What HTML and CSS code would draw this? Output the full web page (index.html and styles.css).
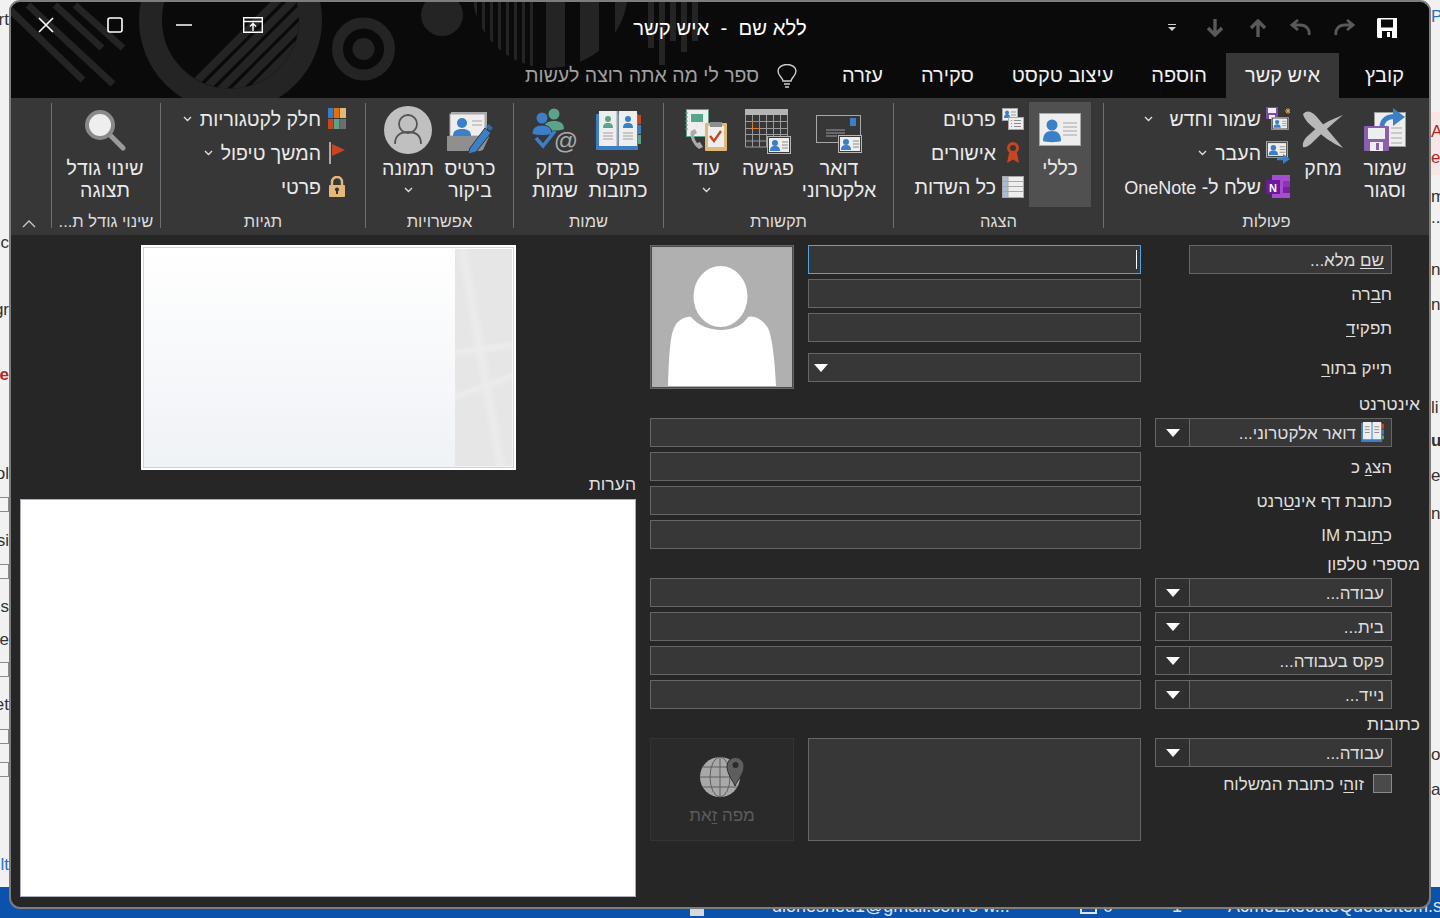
FILE: index.html
```html
<!DOCTYPE html>
<html lang="he">
<head>
<meta charset="utf-8">
<title>ללא שם - איש קשר</title>
<link rel="stylesheet" href="styles.css">
</head>
<body>
<svg class="defs" width="0" height="0" aria-hidden="true">
  <symbol id="card" viewBox="0 0 24 18">
    <rect x=".5" y=".5" width="23" height="17" fill="#3a3a3a" stroke="#b5b5b5"/>
    <rect x="2" y="2" width="20" height="14" fill="#eeeeee"/>
    <circle cx="8" cy="7" r="3" fill="#3a7fc8"/>
    <path d="M3 15c0-4 2-5 5-5s5 1 5 5z" fill="#3a7fc8"/>
    <path d="M15 6h6M15 9h6M15 12h6" stroke="#8c8c8c"/>
  </symbol>
  <symbol id="minibook" viewBox="0 0 24 22">
    <rect x="0" y="1" width="22" height="20" fill="#3a7fc8"/>
    <path d="M2 0h9v18H2zM12 0h9v18h-9z" fill="#eeeeee"/>
    <path d="M4 5h5M4 8h5M4 11h5M14 5h5M14 8h5M14 11h5" stroke="#8c8c8c"/>
    <rect x="22" y="2" width="2" height="5" fill="#c8451f"/>
    <rect x="22" y="8" width="2" height="5" fill="#3a7fc8"/>
    <rect x="22" y="14" width="2" height="4" fill="#5aa58a"/>
  </symbol>
  <symbol id="chev" viewBox="0 0 9 6">
    <path d="M1 1l3.500 3.500L8 1" fill="none" stroke="#dddddd" stroke-width="1.400"/>
  </symbol>
  <symbol id="tri" viewBox="0 0 14 8">
    <path d="M0 0h14L7 8z" fill="#ffffff"/>
  </symbol>
</svg>

<div class="desktop" aria-hidden="true">
  <span class="frag fl" style="top:10px">rt</span>
  <span class="frag fl" style="top:233px">ic</span>
  <span class="frag fl" style="top:300px">gr</span>
  <span class="frag fl red bold" style="top:365px">se</span>
  <span class="frag fl" style="top:464px">ol</span>
  <span class="frag fl" style="top:531px">si</span>
  <span class="frag fl" style="top:597px">es</span>
  <span class="frag fl" style="top:630px">re</span>
  <span class="frag fl" style="top:695px">et</span>
  <span class="frag fl blue" style="top:855px">lt</span>
  <span class="tick" style="top:497px"></span>
  <span class="tick" style="top:564px"></span>
  <span class="tick" style="top:662px"></span>
  <span class="tick" style="top:729px"></span>
  <span class="tick" style="top:762px"></span>
  <span class="pink"></span>
  <span class="frag fr blue" style="top:7px">P</span>
  <span class="frag fr red" style="top:122px">A</span>
  <span class="frag fr red" style="top:148px">e</span>
  <span class="frag fr" style="top:187px">m</span>
  <span class="frag fr" style="top:208px">..</span>
  <span class="frag fr" style="top:260px">n</span>
  <span class="frag fr" style="top:295px">ne</span>
  <span class="frag fr" style="top:398px">li</span>
  <span class="frag fr bold" style="top:431px">u</span>
  <span class="frag fr" style="top:466px">er</span>
  <span class="frag fr" style="top:504px">n</span>
  <span class="frag fr" style="top:745px">o</span>
  <span class="frag fr" style="top:780px">a</span>
  <div class="taskbar">
    <span class="tskbox" style="left:690px"></span>
    <span class="task" style="left:772px">dionesned1@gmail.com's w...</span>
    <span class="tskout" style="left:1080px"></span>
    <span class="task" style="left:1103px">0</span>
    <span class="task" style="left:1172px">1</span>
    <span class="task" style="left:1228px">AcmeExecuteQueueItem.s</span>
  </div>
</div>

<main class="window" dir="rtl">
  <header class="titlebar">
    <svg class="decor" width="1418" height="96" viewBox="11 2 1418 96" aria-hidden="true">
      <defs>
        <clipPath id="ringIn"><path d="M162 20a68.500 68.500 0 1 0 137 0V2H162z"/></clipPath>
        <clipPath id="bigC"><circle cx="550" cy="-10" r="78"/></clipPath>
      </defs>
      <g stroke="#242424" stroke-width="7" fill="none">
        <path d="M8 8l75 72M28 5l85 79M55 5l47 43M75 5l48 43"/>
      </g>
      <circle cx="230.500" cy="20" r="80" fill="none" stroke="#242424" stroke-width="23"/>
      <g clip-path="url(#ringIn)" stroke="#242424" stroke-width="8" fill="none">
        <path d="M278 0L178 100M294 0L194 100M310 0L210 100M326 0L226 100M342 0L242 100M358 0L258 100"/>
      </g>
      <circle cx="363.500" cy="49" r="26" fill="none" stroke="#242424" stroke-width="11"/>
      <circle cx="363.500" cy="49" r="11" fill="#242424"/>
      <circle cx="442" cy="15" r="21" fill="#242424"/>
      <g clip-path="url(#bigC)" fill="#242424">
        <rect x="474" width="3" height="96"/><rect x="482" width="3" height="96"/>
        <rect x="490" width="3" height="96"/><rect x="498" width="3" height="96"/>
        <rect x="506" width="3" height="96"/><rect x="514" width="3" height="96"/>
        <rect x="522" width="3" height="96"/><rect x="530" width="3" height="96"/>
        <rect x="546" width="19" height="96"/><rect x="580" width="19" height="96"/>
        <rect x="615" width="19" height="96"/>
      </g>
      <g fill="#242424">
        <rect x="648" width="6" height="48"/><rect x="659" width="6" height="65"/>
        <rect x="670" width="6" height="41"/><rect x="681" width="6" height="52"/>
        <rect x="692" width="6" height="41"/>
      </g>
    </svg>
    <div class="titlerow">
      <div class="qat">
        <span class="qbtn" title="שמור"><svg width="20" height="20" viewBox="0 0 20 20"><path d="M1 0h19v20H1L0 19V1z" fill="#fff"/><path d="M4 1.500h12v8H4z" fill="#0a0a0a"/><path d="M5 13h10v7H5z" fill="#0a0a0a"/><path d="M10 14h3v5h-3z" fill="#fff"/></svg></span>
        <span class="qbtn"><svg width="22" height="18" viewBox="0 0 22 18"><path d="M3 16c-1-6 3-10 9-10h7M14 1l6 5-6 5" fill="none" stroke="#595959" stroke-width="2.800"/></svg></span>
        <span class="qbtn"><svg width="22" height="18" viewBox="0 0 22 18"><path d="M19 16c1-6-3-10-9-10H3M8 1L2 6l6 5" fill="none" stroke="#595959" stroke-width="2.800"/></svg></span>
        <span class="qbtn"><svg width="16" height="18" viewBox="0 0 16 18"><path d="M8 18V3M1 9l7-7 7 7" fill="none" stroke="#595959" stroke-width="3.400"/></svg></span>
        <span class="qbtn"><svg width="16" height="18" viewBox="0 0 16 18"><path d="M8 0v15M1 9l7 7 7-7" fill="none" stroke="#595959" stroke-width="3.400"/></svg></span>
        <span class="qbtn qmore"><svg width="8" height="7" viewBox="0 0 8 7"><path d="M0 0h8v1H0zM0 3h8L4 7z" fill="#cfcfcf"/></svg></span>
      </div>
      <div class="wintitle">ללא שם&nbsp; - &nbsp;איש קשר</div>
      <div class="wincontrols">
        <span class="wbtn"><svg width="20" height="16" viewBox="0 0 20 16"><path d="M.7.7h18.600v14.600H.7zM1 4.500h18M10 14V7M7 9.500l3-3 3 3" fill="none" stroke="#fff" stroke-width="1.400"/></svg></span>
        <span class="wbtn"><svg width="16" height="2" viewBox="0 0 16 2"><path d="M0 1h16" stroke="#fff" stroke-width="1.400"/></svg></span>
        <span class="wbtn"><svg width="16" height="16" viewBox="0 0 16 16"><rect x="1" y="1" width="14" height="14" rx="2" fill="none" stroke="#fff" stroke-width="1.600"/></svg></span>
        <span class="wbtn"><svg width="16" height="16" viewBox="0 0 16 16"><path d="M1 1l14 14M15 1L1 15" stroke="#fff" stroke-width="1.600"/></svg></span>
      </div>
    </div>
    <nav class="tabs">
      <span class="tab">קובץ</span>
      <span class="tab active">איש קשר</span>
      <span class="tab">הוספה</span>
      <span class="tab">עיצוב טקסט</span>
      <span class="tab">סקירה</span>
      <span class="tab">עזרה</span>
      <span class="tell">
        <svg width="20" height="24" viewBox="0 0 20 24"><path d="M6 17c0-3-5-5-5-10a9 6.500 0 0 1 18 0c0 5-5 7-5 10zM7 20h6M8 23h4" fill="none" stroke="#d0d0d0" stroke-width="1.400"/></svg>
        <span>ספר לי מה אתה רוצה לעשות</span>
      </span>
    </nav>
  </header>

  <section class="ribbon">
    <div class="group g1">
      <div class="gbody">
        <div class="big w60">
          <span class="bigicon"><svg width="44" height="44" viewBox="0 0 44 44">
            <rect x="11.500" y="4.500" width="31" height="34" fill="#eeeeee" stroke="#9b9b9b"/>
            <path d="M28 20h11M28 25h11M28 30h11M28 35h11" stroke="#a5a5a5"/>
            <path d="M19 19C19 12 24 8.500 32 8.500" fill="none" stroke="#3a7fc8" stroke-width="5"/>
            <path d="M30 0l12 9-12 9z" fill="#3a7fc8"/>
            <rect x="1" y="18" width="25" height="25" rx="1" fill="#8a5fb0"/>
            <rect x="5" y="20" width="17" height="11" fill="#eeeeee"/>
            <rect x="7" y="34" width="13" height="9" fill="#eeeeee"/>
            <rect x="13" y="35" width="3" height="7" fill="#8a5fb0"/>
          </svg></span>
          <span class="lbl">שמור<br>וסגור</span>
        </div>
        <div class="big w60">
          <span class="bigicon"><svg width="42" height="38" viewBox="0 0 42 38">
            <path d="M1 3C5-1 9 0 14 5L41 37C30 32 20 25 12 17 7 13 2 8 1 3z" fill="#b8b8b8"/>
            <path d="M1 36C0 31 3 27 8 23 16 15 28 9 41 4 30 13 20 22 12 30 8 34 4 37 1 36z" fill="#b8b8b8"/>
          </svg></span>
          <span class="lbl">מחק</span>
        </div>
        <div class="smalls">
          <div class="small">
            <span class="sicon"><svg width="24" height="24" viewBox="0 0 24 24">
              <rect x="0" y="0" width="12" height="12" fill="#7a4ea8"/><rect x="2" y="1" width="8" height="5" fill="#eee"/><rect x="3" y="8" width="6" height="4" fill="#eee"/>
              <use href="#card" x="5" y="10" width="18" height="13"/>
              <path d="M22 7V1M19 4h6M20 2l4 4M24 2l-4 4" stroke="#e3a45a"/>
            </svg></span><span>שמור וחדש</span><svg class="chev far"><use href="#chev"/></svg>
          </div>
          <div class="small">
            <span class="sicon"><svg width="24" height="24" viewBox="0 0 24 24">
              <use href="#card" x="0" y="0" width="22" height="17"/>
              <path d="M11 18h9" stroke="#3a7fc8" stroke-width="2.400"/><path d="M17 13l7 5-7 5z" fill="#3a7fc8"/>
            </svg></span><span>העבר</span><svg class="chev"><use href="#chev"/></svg>
          </div>
          <div class="small">
            <span class="sicon"><svg width="24" height="24" viewBox="0 0 24 24">
              <rect x="6" y="0" width="18" height="23" fill="#a64dcf"/>
              <rect x="17" y="6" width="7" height="6" fill="#8f33b5"/><rect x="17" y="12" width="7" height="6" fill="#7a1fa0"/>
              <rect x="0" y="5" width="14" height="14" fill="#6a1a9a"/>
              <text x="7" y="16.500" class="n">N</text>
            </svg></span><span>שלח ל- <span class="latin">OneNote</span></span>
          </div>
        </div>
      </div>
      <div class="gname">פעולות</div>
    </div>

    <div class="group g2">
      <div class="gbody">
        <div class="big w62 on">
          <span class="bigicon"><svg width="42" height="33" viewBox="0 0 42 33">
            <rect x=".5" y=".5" width="41" height="32" fill="#eeeeee" stroke="#a8a8a8"/>
            <circle cx="13" cy="12" r="5.500" fill="#3a7fc8"/>
            <path d="M4 28c0-7 3-10 9-10s9 3 9 10c-3 1.500-15 1.500-18 0z" fill="#3a7fc8"/>
            <path d="M24 10h14M24 14h14M24 18h14M24 22h14" stroke="#a5a5a5"/>
          </svg></span>
          <span class="lbl">כללי</span>
        </div>
        <div class="smalls">
          <div class="small">
            <span class="sicon"><svg width="22" height="22" viewBox="0 0 22 22">
              <rect x=".5" y=".5" width="15" height="12" fill="#eee" stroke="#a8a8a8"/>
              <circle cx="5" cy="4.500" r="2" fill="#3a7fc8"/><path d="M2 10c0-3 1-4 3-4s3 1 3 4z" fill="#3a7fc8"/><path d="M9 4h5M9 7h5" stroke="#999"/>
              <rect x="6.500" y="9.500" width="15" height="12" fill="#eee" stroke="#a8a8a8"/>
              <path d="M9 12.500h1M12 12.500h7M9 15.500h1M12 15.500h7M9 18.500h1M12 18.500h7" stroke="#8c8c8c"/>
            </svg></span><span>פרטים</span>
          </div>
          <div class="small">
            <span class="sicon"><svg width="22" height="22" viewBox="0 0 22 22">
              <circle cx="11" cy="6" r="4.500" fill="none" stroke="#c8451f" stroke-width="3"/>
              <path d="M7 11h8l2 10-6-3.500L5 21z" fill="#c8451f"/>
            </svg></span><span>אישורים</span>
          </div>
          <div class="small">
            <span class="sicon"><svg width="22" height="22" viewBox="0 0 22 22">
              <rect x=".5" y=".5" width="21" height="21" fill="#eee" stroke="#a8a8a8"/>
              <rect x="1" y="1" width="5" height="20" fill="#a8bdd4"/>
              <path d="M1 5.500h20M1 10.500h20M1 15.500h20M6 1v20" stroke="#a8a8a8"/>
            </svg></span><span>כל השדות</span>
          </div>
        </div>
      </div>
      <div class="gname">הצגה</div>
    </div>

    <div class="group g3">
      <div class="gbody">
        <div class="big w80">
          <span class="bigicon nudge8"><svg width="46" height="38" viewBox="0 0 46 38">
            <rect x=".5" y=".5" width="44" height="27" fill="none" stroke="#a8a8a8"/>
            <rect x="34" y="3" width="6" height="8" fill="#3a7fc8"/>
            <path d="M10 15h19M10 18h19M10 21h11" stroke="#9c9c9c"/>
            <use href="#card" x="22" y="20" width="24" height="18"/>
          </svg></span>
          <span class="lbl">דואר<br>אלקטרוני</span>
        </div>
        <div class="big w62">
          <span class="bigicon nudge3"><svg width="47" height="45" viewBox="0 0 47 45">
            <rect x="0" y="0" width="43" height="6" fill="#b5b5b5"/>
            <path d="M.5 6v32h42V6M7.500 6v32M14.500 6v32M21.500 6v32M28.500 6v32M35.500 6v32M.5 12.500h42M.5 19.500h42M.5 25.500h42M.5 32h42" fill="none" stroke="#9a9a9a"/>
            <rect x="7.500" y="12.500" width="7" height="7" fill="#373737" stroke="#e0781f"/>
            <use href="#card" x="22" y="27" width="24" height="18"/>
          </svg></span>
          <span class="lbl">פגישה</span>
        </div>
        <div class="big w62">
          <span class="bigicon"><svg width="42" height="42" viewBox="0 0 42 42">
            <rect x="1.500" y=".5" width="22" height="27" fill="#eeeeee" stroke="#5aa58a"/>
            <rect x="6" y="5" width="12" height="8" fill="#5aa58a"/>
            <path d="M0 4h3M0 8h3M0 12h3M0 16h3M0 20h3" stroke="#888"/>
            <path d="M6 22c-2 5 2 14 8 18l4-2-3-5-3 1c-2-3-3-5-3-8l3-2-2-4z" fill="#aaaaaa"/>
            <rect x="20" y="14" width="22" height="28" rx="1" fill="#e0b878"/>
            <rect x="23" y="17" width="16" height="21" fill="#eeeeee"/>
            <rect x="25" y="13" width="12" height="5" fill="#8d8d8d"/>
            <path d="M25 27l4 5 7-10" fill="none" stroke="#c8451f" stroke-width="2.400"/>
          </svg></span>
          <span class="lbl">עוד</span>
          <svg class="chev under"><use href="#chev"/></svg>
        </div>
      </div>
      <div class="gname">תקשורת</div>
    </div>

    <div class="group g4">
      <div class="gbody">
        <div class="big w62">
          <span class="bigicon"><svg width="45" height="40" viewBox="0 0 45 40">
            <rect x="0" y="4" width="42" height="36" fill="#3a7fc8"/>
            <rect x="42" y="5" width="3" height="9" fill="#c8451f"/><rect x="42" y="15" width="3" height="9" fill="#3a7fc8"/><rect x="42" y="25" width="3" height="9" fill="#5aa58a"/>
            <path d="M3 1h18v35H3zM23 1h18v35H23z" fill="#eeeeee"/>
            <path d="M21.500 1v35" stroke="#a0a0a0" stroke-width="2"/>
            <circle cx="12" cy="9" r="3" fill="#5aa58a"/><path d="M7 18c0-4 2-5 5-5s5 1 5 5z" fill="#5aa58a"/>
            <circle cx="32" cy="9" r="3" fill="#3a7fc8"/><path d="M27 18c0-4 2-5 5-5s5 1 5 5z" fill="#3a7fc8"/>
            <path d="M7 23h10M7 26h10M7 29h10M27 23h10M27 26h10M27 29h10" stroke="#a0a0a0"/>
          </svg></span>
          <span class="lbl">פנקס<br>כתובות</span>
        </div>
        <div class="big w64">
          <span class="bigicon"><svg width="46" height="46" viewBox="0 0 46 46">
            <circle cx="22" cy="7" r="5.500" fill="#5aa58a"/><path d="M12 22c0-6 4-8 10-8s10 2 10 8c-4 2-16 2-20 0z" fill="#5aa58a"/>
            <circle cx="10" cy="11" r="5.500" fill="#3a7fc8"/><path d="M0 27c0-6 4-9 10-9s10 3 10 9c-4 2-16 2-20 0z" fill="#3a7fc8" stroke="#373737"/>
            <path d="M4 31l7 8 12-15" fill="none" stroke="#3a7fc8" stroke-width="3.600"/>
            <text x="34" y="42" class="at">@</text>
          </svg></span>
          <span class="lbl">בדוק<br>שמות</span>
        </div>
      </div>
      <div class="gname">שמות</div>
    </div>

    <div class="group g5">
      <div class="gbody">
        <div class="big w62">
          <span class="bigicon nudge6"><svg width="46" height="42" viewBox="0 0 46 42">
            <rect x="4" y="0" width="36" height="24" fill="#aaaaaa"/>
            <rect x="3" y="2" width="35" height="22" fill="#eeeeee" stroke="#a8a8a8"/>
            <circle cx="15" cy="11" r="5" fill="#3a7fc8"/>
            <path d="M6 24c0-5 3-7 9-7s9 2 9 7z" fill="#3a7fc8"/>
            <path d="M25 9h10M25 13h10" stroke="#a5a5a5"/>
            <path d="M0 24h38l4-3v4l-6 13-3 1H0z" fill="#8f8f8f"/>
            <path d="M23 36L38 16l6 5-15 19-8 2z" fill="#3a7fc8" stroke="#373737"/>
            <path d="M39 15l3-3 4 4-3 3z" fill="#2f69a8"/>
          </svg></span>
          <span class="lbl">כרטיס<br>ביקור</span>
        </div>
        <div class="big w62">
          <span class="bigicon"><svg width="48" height="48" viewBox="0 0 48 48">
            <circle cx="24" cy="24" r="24" fill="#c0c0c0"/>
            <circle cx="24" cy="18" r="9" fill="none" stroke="#555" stroke-width="1.800"/>
            <path d="M11 38c0-8 5-12 13-12s13 4 13 12" fill="none" stroke="#555" stroke-width="1.800"/>
          </svg></span>
          <span class="lbl">תמונה</span>
          <svg class="chev under"><use href="#chev"/></svg>
        </div>
      </div>
      <div class="gname">אפשרויות</div>
    </div>

    <div class="group g6">
      <div class="gbody">
        <div class="smalls">
          <div class="small tag">
            <span class="sicon t18"><svg width="18" height="22" viewBox="0 0 18 22">
              <rect width="5.500" height="10" fill="#3a7cc4"/><rect x="6" width="5.500" height="10" fill="#e07010"/><rect x="12" width="6" height="10" fill="#e0b878"/>
              <rect y="11" width="5.500" height="10" fill="#c8451f"/><rect x="6" y="11" width="5.500" height="10" fill="#5aa58a"/><rect x="12" y="11" width="6" height="10" fill="#6e6e6e"/>
            </svg></span><span>חלק לקטגוריות</span><svg class="chev"><use href="#chev"/></svg>
          </div>
          <div class="small tag">
            <span class="sicon t18"><svg width="18" height="22" viewBox="0 0 18 22">
              <rect x="1" y="0" width="2" height="22" fill="#aaaaaa"/>
              <path d="M4 2l13 6L4 14z" fill="#c8451f"/>
            </svg></span><span>המשך טיפול</span><svg class="chev"><use href="#chev"/></svg>
          </div>
          <div class="small tag">
            <span class="sicon t18"><svg width="18" height="22" viewBox="0 0 18 22">
              <path d="M4 9V6a5 5 0 0 1 10 0v3" fill="none" stroke="#e3b87a" stroke-width="2.400"/>
              <rect x="1" y="9" width="16" height="12" rx="1" fill="#e3b87a"/>
              <circle cx="9" cy="13.500" r="2" fill="#333"/><rect x="8" y="14" width="2" height="4" fill="#333"/>
            </svg></span><span>פרטי</span>
          </div>
        </div>
      </div>
      <div class="gname">תגיות</div>
    </div>

    <div class="group g7">
      <div class="gbody">
        <div class="big w90">
          <span class="bigicon"><svg width="42" height="42" viewBox="0 0 42 42">
            <path d="M26 26l13 13" stroke="#9a9a9a" stroke-width="5" stroke-linecap="round"/>
            <circle cx="16" cy="16" r="13" fill="#eeeeee" stroke="#8a8a8a" stroke-width="4"/>
          </svg></span>
          <span class="lbl">שינוי גודל<br>תצוגה</span>
        </div>
      </div>
      <div class="gname">שינוי גודל ת...</div>
    </div>

    <div class="collapse"><svg width="14" height="8" viewBox="0 0 14 8"><path d="M1 7l6-6 6 6" fill="none" stroke="#c8c8c8" stroke-width="1.400"/></svg></div>
  </section>

  <section class="form">
    <div class="fields">
      <div class="topblock">
        <div class="topcol">
          <div class="row"><div class="lead"><span class="fbtn w203"><span><u>שם</u> מלא...</span></span></div><div class="input focus"><span class="caret"></span></div></div>
          <div class="row"><div class="lead"><span class="flabel">ח<u>ב</u>רה</span></div><div class="input"></div></div>
          <div class="row"><div class="lead"><span class="flabel">תפקי<u>ד</u></span></div><div class="input"></div></div>
          <div class="row spaced"><div class="lead"><span class="flabel">תייק בתו<u>ר</u></span></div><div class="input dd"><svg class="tri"><use href="#tri"/></svg></div></div>
        </div>
        <div class="photo">
          <svg width="142" height="142" viewBox="0 0 142 142">
            <rect width="142" height="142" fill="#b0b0b0"/>
            <ellipse cx="69.500" cy="50.500" rx="27" ry="30.500" fill="#ffffff"/>
            <path d="M17 140C18 110 19 88 24 80 27 74 35 70 40 71 47 79 58 84 70 84 82 84 92 79 97 71 104 69 112 74 117 82 121 90 124 115 125 140z" fill="#ffffff"/>
            <rect x=".5" y=".5" width="141" height="141" fill="none" stroke="#4a4a4a"/>
          </svg>
        </div>
      </div>

      <div class="section">אינטרנט</div>
      <div class="row"><div class="lead"><span class="fbtn w203 withicon"><svg class="mbook"><use href="#minibook"/></svg><span>דואר אלקטרוני...</span></span><span class="ddbtn"><svg class="tri"><use href="#tri"/></svg></span></div><div class="input"></div></div>
      <div class="row"><div class="lead"><span class="flabel">הצ<u>ג</u> כ</span></div><div class="input"></div></div>
      <div class="row"><div class="lead"><span class="flabel">כתובת דף אינ<u>ט</u>רנט</span></div><div class="input"></div></div>
      <div class="row"><div class="lead"><span class="flabel">כ<u>ת</u>ובת IM</span></div><div class="input"></div></div>

      <div class="section">מספרי טלפון</div>
      <div class="row"><div class="lead"><span class="fbtn w203">עבודה...</span><span class="ddbtn"><svg class="tri"><use href="#tri"/></svg></span></div><div class="input"></div></div>
      <div class="row"><div class="lead"><span class="fbtn w203">בית...</span><span class="ddbtn"><svg class="tri"><use href="#tri"/></svg></span></div><div class="input"></div></div>
      <div class="row"><div class="lead"><span class="fbtn w203">פקס בעבודה...</span><span class="ddbtn"><svg class="tri"><use href="#tri"/></svg></span></div><div class="input"></div></div>
      <div class="row"><div class="lead"><span class="fbtn w203">נייד...</span><span class="ddbtn"><svg class="tri"><use href="#tri"/></svg></span></div><div class="input"></div></div>

      <div class="section">כתובות</div>
      <div class="addr">
        <div class="addrlead">
          <div class="lead"><span class="fbtn w203">עבודה...</span><span class="ddbtn"><svg class="tri"><use href="#tri"/></svg></span></div>
          <div class="check"><span class="box"></span><span class="flabel">זו<u>ה</u>י כתובת המשלוח</span></div>
        </div>
        <div class="addrbox"></div>
        <div class="map">
          <svg width="46" height="44" viewBox="0 0 46 44">
            <circle cx="21" cy="23" r="20" fill="#a8a8a8"/>
            <path d="M1 23h40M4 13h34M4 33h34M21 3v40" fill="none" stroke="#5e5e5e"/>
            <ellipse cx="21" cy="23" rx="10" ry="20" fill="none" stroke="#5e5e5e"/>
            <path d="M36 32c-3-7-8-12-8-20a8.500 8.500 0 0 1 17 0c0 8-6 13-9 20z" fill="#5e5e5e" stroke="#2c2c2c"/>
            <circle cx="36.500" cy="11" r="3" fill="#2c2c2c"/>
          </svg>
          <span class="maptext">מפה <u>ז</u>את</span>
        </div>
      </div>
    </div>

    <div class="notesside">
      <div class="bizcard"><span class="cardstrip"></span></div>
      <div class="noteslabel">הערות</div>
      <div class="notes"></div>
    </div>
  </section>
</main>
</body>
</html>
```

FILE: styles.css
```css
* { box-sizing: border-box; }
html, body { margin: 0; height: 918px; overflow: hidden; }
body { background: #f1f1f1; font-family: "Liberation Sans", Arial, sans-serif; position: relative; }
u { text-decoration-thickness: 1px; text-underline-offset: 2px; }
svg { display: block; flex: none; }
.defs { position: absolute; }

/* Desktop behind the window */
.desktop { position: absolute; inset: 0; overflow: hidden; color: #333; }
.frag { position: absolute; font-size: 17px; line-height: 20px; white-space: nowrap; }
.fl { right: 1431px; }
.fr { left: 1431px; }
.red { color: #b3261e; }
.blue { color: #2b6fc0; }
.bold { font-weight: 700; }
.tick { position: absolute; left: 0; width: 9px; height: 15px; border: 1px solid #8a8a8a; border-left: 0; background: #f4f4f4; }
.pink { position: absolute; left: 1431px; top: 112px; width: 9px; height: 63px; background: #f8e6e6; }
.taskbar { position: absolute; left: 0; right: 0; top: 887px; height: 31px; background: #0b52ac; }
.task { position: absolute; top: 9px; font-size: 18px; line-height: 20px; color: #dbe6f5; white-space: nowrap; }
.tskbox { position: absolute; top: 21px; width: 14px; height: 8px; background: #d8d8d8; }
.tskout { position: absolute; top: 18px; width: 17px; height: 9px; border: 2px solid #dbe6f5; }

/* Window */
.window {
  position: relative;
  z-index: 1;
  margin-left: 9px;
  width: 1422px;
  height: 909px;
  border: 2px solid #7d7d7d;
  border-radius: 11px;
  background: #262626;
  overflow: hidden;
  display: flex;
  flex-direction: column;
}
.titlebar { position: relative; height: 96px; background: #0a0a0a; flex: none; }
.decor { position: absolute; left: 0; top: 0; }
.titlerow { position: relative; height: 51px; display: grid; grid-template-columns: 1fr auto 1fr; align-items: center; }
.qat { display: flex; padding-right: 21px; align-items: center; height: 51px; }
.qbtn { width: 43px; height: 30px; display: flex; align-items: center; justify-content: center; }
.wintitle { color: #fff; font-size: 20.300px; white-space: nowrap; padding-top: 2px; }
.wincontrols { display: flex; justify-content: flex-end; align-self: start; }
.wbtn { width: 69px; height: 46px; display: flex; align-items: center; justify-content: center; }
.tabs { position: relative; height: 45px; display: flex; padding-right: 6px; align-items: stretch; }
.tab { padding: 0 19px; color: #f0f0f0; font-size: 20px; line-height: 45px; white-space: nowrap; }
.tab:first-child { margin-left: 7px; }
.tab.active { background: #373737; }
.tell { display: flex; align-items: center; gap: 18px; margin-right: 26px; color: #a0a0a0; font-size: 19.500px; white-space: nowrap; }

/* Ribbon */
.ribbon { height: 137px; background: #373737; display: flex; flex: none; padding-top: 5px; color: #eaeaea; font-size: 19.500px; }
.group { height: 125px; border-left: 1px solid #6f6f6f; display: flex; flex-direction: column; flex: none; }
.gbody { height: 111px; display: flex; flex: none; }
.gname { height: 15px; line-height: 15px; flex: none; text-align: center; font-size: 16.500px; color: #dcdcdc; white-space: nowrap; }
.g1 { width: 326px; } .g1 .gbody { padding-right: 14px; }
.g1 .big + .big { margin-right: 2px; }
.g1 .smalls { margin-right: 3px; }
.g2 { width: 210px; } .g2 .gbody { padding-right: 12px; }
.g2 .smalls { margin-right: 5px; }
.g2 .small { gap: 4px; }
.g3 { width: 230px; } .g3 .gbody { padding-right: 14px; }
.g4 { width: 150px; } .g4 .gbody { padding-right: 14px; }
.g5 { width: 148px; } .g5 .gbody { padding-right: 12px; }
.g6 { width: 205px; } .g6 .gbody { padding-right: 19px; }
.g7 { width: 109px; } .g7 .gbody { padding-right: 10px; }
.big { display: flex; flex-direction: column; align-items: center; text-align: center; flex: none; height: 105px; margin-top: -1px; }
.big.on { background: #505050; }
.w60 { width: 60px; } .w62 { width: 62px; } .w64 { width: 64px; } .w80 { width: 80px; } .w90 { width: 90px; }
.bigicon { height: 55px; display: flex; align-items: center; justify-content: center; }
.nudge3 { padding-top: 3px; }
.nudge6 { padding-top: 6px; }
.nudge8 { padding-top: 8px; }
.lbl { line-height: 22px; white-space: nowrap; }
.smalls { display: flex; flex-direction: column; margin-top: -1px; }
.small { height: 34px; display: flex; align-items: center; gap: 5px; white-space: nowrap; }
.latin { font-size: 18px; }
.sicon { width: 24px; display: flex; justify-content: flex-start; }
.tag { gap: 7px; }
.t18 { width: 18px; }
.chev { width: 9px; height: 6px; margin-right: 3px; }
.tag .chev { margin-right: 1px; }
.far { margin-right: 12px; }
.under { margin: 8px 0 0; }
.n { font-size: 11px; font-weight: 700; fill: #fff; text-anchor: middle; font-family: "Liberation Sans", Arial, sans-serif; direction: ltr; }
.at { font-size: 24px; fill: #aaaaaa; text-anchor: middle; font-family: "Liberation Sans", Arial, sans-serif; direction: ltr; }
.collapse { flex: 1; display: flex; align-items: flex-end; justify-content: center; padding: 0 4px 0 0; height: 125px; }

/* Form */
.form { flex: 1; display: flex; padding: 10px 0 0; color: #dedede; font-size: 17px; }
.fields { width: 779px; padding-right: 9px; flex: none; }
.topblock { display: flex; gap: 14px; height: 144px; margin-right: 28px; }
.topcol { width: 584px; display: flex; flex-direction: column; gap: 5px; }
.fields > .row { width: 742px; margin-right: 28px; margin-bottom: 5px; }
.fields > .row + .section { margin-top: -5px; }
.row { height: 29px; display: flex; gap: 14px; flex: none; }
.row.spaced { margin-top: 6px; }
.lead { width: 237px; height: 29px; display: flex; flex: none; align-items: center; }
.input { flex: 1; height: 29px; background: #373737; border: 1px solid #666; position: relative; display: flex; align-items: center; }
.input.focus { border-color: #4ba3e8; }
.caret { width: 1px; height: 19px; background: #fff; margin-right: 3px; }
.dd { justify-content: flex-end; padding-left: 5px; }
.tri { width: 14px; height: 8px; }
.fbtn { width: 203px; height: 29px; background: #373737; border: 1px solid #666; display: flex; align-items: center; padding: 2px 7px 0; white-space: nowrap; }
.withicon { gap: 5px; }
.mbook { width: 23px; height: 21px; margin-top: -2px; }
.ddbtn { width: 35px; height: 29px; margin-right: -1px; background: #303030; border: 1px solid #666; display: flex; align-items: center; justify-content: center; }
.flabel { white-space: nowrap; padding-top: 2px; }
.section { height: 29px; line-height: 31px; font-size: 17.500px; white-space: nowrap; }
.photo { width: 144px; height: 144px; border: 1px solid #666; background: #2a2a2a; flex: none; }
.addr { display: flex; gap: 14px; margin-right: 28px; width: 742px; }
.addrlead { width: 237px; flex: none; }
.check { display: flex; align-items: center; gap: 9px; margin-top: 7px; height: 19px; }
.box { width: 19px; height: 19px; background: #4a4a4a; border: 1px solid #8a8a8a; }
.addrbox { width: 333px; height: 103px; background: #373737; border: 1px solid #666; flex: none; }
.map { width: 144px; height: 103px; background: #2a2a2a; border: 1px solid #333; display: flex; flex-direction: column; align-items: center; padding-top: 15px; gap: 8px; flex: none; }
.maptext { color: #5c5c5c; line-height: 20px; }

.notesside { width: 616px; margin-right: 14px; flex: none; display: flex; flex-direction: column; }
.bizcard { align-self: center; width: 375px; height: 225px; background: linear-gradient(#ffffff, #eff2f6); border: 2px solid #fff; box-shadow: inset 0 0 0 1px #d2d2d2; display: flex; justify-content: flex-start; padding: 2px; }
.cardstrip {
  width: 57px;
  background:
    linear-gradient(172deg, transparent 44%, #ececec 46%, transparent 49%),
    linear-gradient(160deg, transparent 60%, #ececec 62%, transparent 65%),
    linear-gradient(80deg, transparent 40%, #ececec 48%, transparent 56%),
    #e6e6e6;
}
.noteslabel { height: 29px; line-height: 29px; font-size: 17.500px; }
.notes { width: 616px; height: 398px; background: #fff; border: 1px solid #a9b0bb; }
```
